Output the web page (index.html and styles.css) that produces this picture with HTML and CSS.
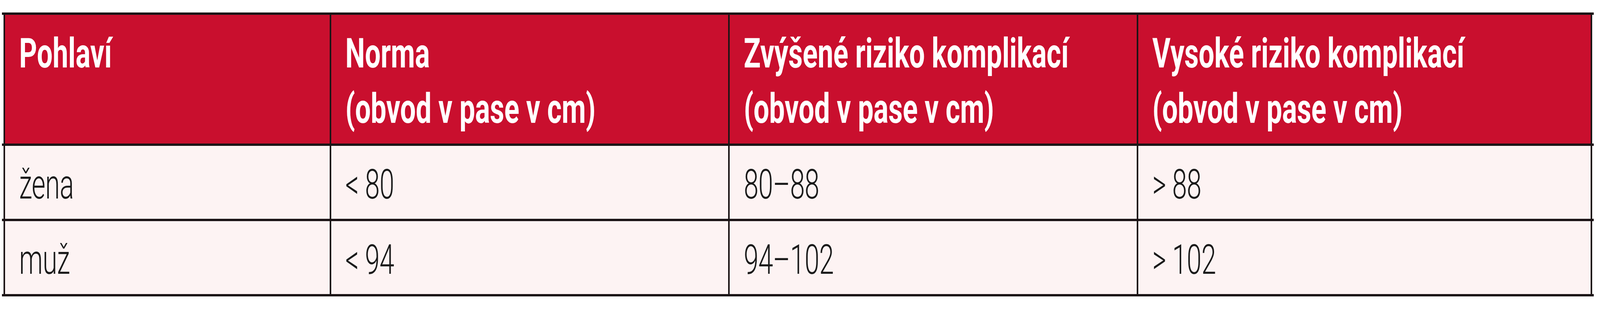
FILE: index.html
```html
<!DOCTYPE html>
<html lang="cs">
<head>
<meta charset="utf-8">
<title>Obvod v pase</title>
<link rel="stylesheet" href="styles.css">
</head>
<body>
<div class="table" role="table">
  <div class="row head" role="row">
    <div class="cell" role="columnheader"><span class="txt">Pohlaví</span></div>
    <div class="cell" role="columnheader"><span class="txt">Norma</span><span class="txt">(obvod v pase v cm)</span></div>
    <div class="cell" role="columnheader"><span class="txt">Zvýšené riziko komplikací</span><span class="txt">(obvod v pase v cm)</span></div>
    <div class="cell" role="columnheader"><span class="txt">Vysoké riziko komplikací</span><span class="txt">(obvod v pase v cm)</span></div>
  </div>
  <div class="row" role="row">
    <div class="cell" role="cell"><span class="txt">žena</span></div>
    <div class="cell" role="cell"><span class="txt">&lt; 80</span></div>
    <div class="cell" role="cell"><span class="txt">80–88</span></div>
    <div class="cell" role="cell"><span class="txt">&gt; 88</span></div>
  </div>
  <div class="row" role="row">
    <div class="cell" role="cell"><span class="txt">muž</span></div>
    <div class="cell" role="cell"><span class="txt">&lt; 94</span></div>
    <div class="cell" role="cell"><span class="txt">94–102</span></div>
    <div class="cell" role="cell"><span class="txt">&gt; 102</span></div>
  </div>
</div>
</body>
</html>
```

FILE: styles.css
```css
html, body {
  margin: 0;
  padding: 0;
  background: #ffffff;
}

body {
  font-family: Roboto, "Liberation Sans", Arial, sans-serif;
  color: #1a1a1a;
}

/* The page is laid out for the 4096px-wide viewport it is rendered in;
   text is condensed horizontally to match the narrow face of the original. */
.table {
  width: 4075px;
  margin: 32px 0 0 5px;
  border-top: 6px solid #1c1416;
}

.row {
  display: grid;
  grid-template-columns: 835px 1020px 1046px 1166px;
  padding: 0 4px;
  border-bottom: 6px solid #1c1416;
}

.cell {
  box-sizing: border-box;
  min-width: 0;
  overflow: hidden;
  border-left: 4px solid #1c1416;
  background: #fdf3f3;
  padding: 28px 10px 17px 36px;
  font-size: 106px;
  line-height: 142px;
  font-weight: 300;
  letter-spacing: -1px;
  white-space: nowrap;
}

.cell:last-child {
  border-right: 4px solid #1c1416;
}

.txt {
  display: block;
  transform: scaleX(0.645);
  transform-origin: 0 50%;
}

.head .cell {
  background: #c90f2e;
  color: #ffffff;
  font-weight: 700;
  letter-spacing: 0;
  padding-bottom: 18px;
}

.head .txt {
  transform: scaleX(0.672);
}
```
